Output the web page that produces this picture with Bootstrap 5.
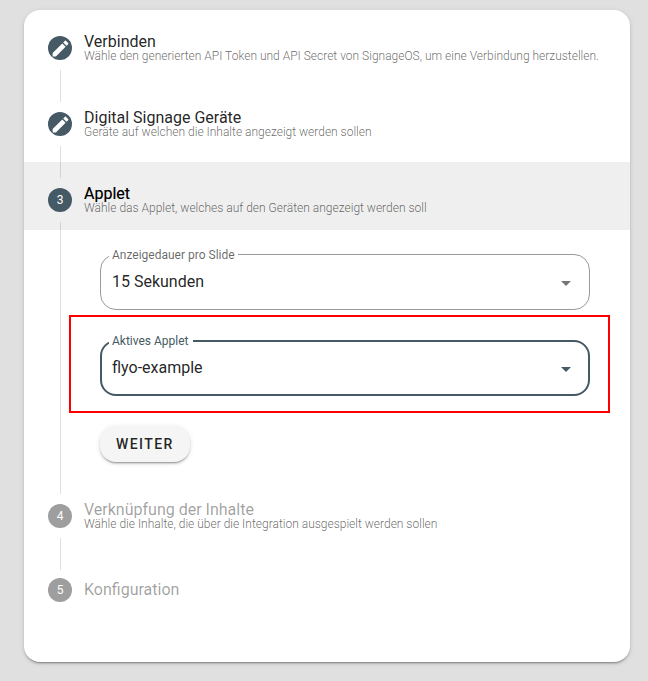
<!DOCTYPE html>
<html lang="de">
<head>
<meta charset="utf-8">
<meta name="viewport" content="width=device-width, initial-scale=1">
<title>Applet einrichten</title>
<link href="https://cdn.jsdelivr.net/npm/bootstrap@5.3.0/dist/css/bootstrap.min.css" rel="stylesheet">
<style>
  :root { --slate: #455a64; }
  body { background: #e0e0e0; font-family: Roboto, "Liberation Sans", sans-serif; color: rgba(0,0,0,.87); }
  .page-area { padding: 10px 18px 19px 24px; }
  .stepper { border-radius: 16px; padding-bottom: 44px; box-shadow: 0 3px 1px -2px rgba(0,0,0,.2), 0 2px 2px 0 rgba(0,0,0,.14), 0 1px 5px 0 rgba(0,0,0,.12); }
  .step-head { padding: 24px 24px 16px; gap: 12px; color: inherit; }
  .step-dot { width: 24px; height: 24px; font-size: 12px; line-height: 24px; background: var(--slate); }
  .step-title { font-size: 16px; line-height: 16px; }
  .step-sub { font-size: 12px; line-height: 12px; font-weight: 300; color: rgba(0,0,0,.6); }
  .is-current { background: #efefef; }
  .is-current .step-title { color: #000; text-shadow: 0 0 0 rgba(0,0,0,.5); }
  .is-pending .step-dot { background: #9e9e9e; }
  .is-pending .step-title { color: rgba(0,0,0,.38); }
  .step-line { margin: -8px 0 -16px 36px; min-height: 32px; border-left: 1px solid rgba(0,0,0,.12); }
  .step-body { padding: 32px 20px 32px 8px; }
  .inset { margin-left: 31px; margin-right: 20px; }
  .highlight { margin-top: 5px; padding: 23px 18px 15px 29px; border: 2px solid #f00; }
  .outlined { --line: #9a9a9a; --arrow: #757575; }
  .outlined.is-focused { --line: var(--slate); --arrow: var(--slate); }
  .outlined label { top: -7px; left: 9px; padding: 0 3px; font-size: 12px; line-height: 16px; color: rgba(0,0,0,.6); }
  .outlined.is-focused label { color: var(--slate); padding-right: 4px; }
  .outlined select { height: 56px; padding: 0 40px 0 11px; font-size: 16px; color: inherit; border: 1px solid var(--line); border-radius: 16px; appearance: none; outline: 0; }
  .outlined.is-focused select { border-width: 2px; padding-left: 10px; }
  .outlined svg { right: 12px; top: 17px; width: 24px; height: 24px; fill: var(--arrow); pointer-events: none; }
  .btn-next { margin-top: 13px; height: 36px; padding: 0 16px; border-radius: 16px; border: 0; font-size: 14px; font-weight: 500; letter-spacing: .1em; color: rgba(0,0,0,.87); background: #f5f5f5; box-shadow: 0 3px 1px -2px rgba(0,0,0,.2), 0 2px 2px 0 rgba(0,0,0,.14), 0 1px 5px 0 rgba(0,0,0,.12); }
</style>
<script src="https://cdn.jsdelivr.net/npm/bootstrap@5.3.0/dist/js/bootstrap.bundle.min.js"></script>
</head>
<body>
<svg class="d-none" aria-hidden="true">
  <symbol id="pencil" viewBox="0 0 24 24"><path d="M20.71 7.04c.39-.39.39-1.04 0-1.41l-2.34-2.34c-.37-.39-1.02-.39-1.41 0l-1.84 1.83 3.75 3.75M3 17.25V21h3.75L17.81 9.93l-3.75-3.75L3 17.25Z"/></symbol>
  <symbol id="caret" viewBox="0 0 24 24"><path d="M7 10l5 5 5-5H7Z"/></symbol>
</svg>
<main class="page-area">
  <ol class="stepper list-unstyled bg-white mb-0">
    <li>
      <button type="button" class="step-head d-flex align-items-center w-100 border-0 bg-transparent text-start">
        <span class="step-dot rounded-circle d-flex align-items-center justify-content-center flex-shrink-0"><svg width="21" height="21" fill="#fff" aria-hidden="true"><use href="#pencil"/></svg></span>
        <span class="d-flex flex-column"><span class="step-title">Verbinden</span><span class="step-sub">Wähle den generierten API Token und API Secret von SignageOS, um eine Verbindung herzustellen.</span></span>
      </button>
      <div class="step-line position-relative z-1"></div>
    </li>
    <li>
      <button type="button" class="step-head d-flex align-items-center w-100 border-0 bg-transparent text-start">
        <span class="step-dot rounded-circle d-flex align-items-center justify-content-center flex-shrink-0"><svg width="21" height="21" fill="#fff" aria-hidden="true"><use href="#pencil"/></svg></span>
        <span class="d-flex flex-column"><span class="step-title">Digital Signage Geräte</span><span class="step-sub">Geräte auf welchen die Inhalte angezeigt werden sollen</span></span>
      </button>
      <div class="step-line position-relative z-1"></div>
    </li>
    <li>
      <div class="step-head is-current d-flex align-items-center" aria-current="step">
        <span class="step-dot rounded-circle text-white text-center flex-shrink-0">3</span>
        <span class="d-flex flex-column"><span class="step-title">Applet</span><span class="step-sub">Wähle das Applet, welches auf den Geräten angezeigt werden soll</span></span>
      </div>
      <form class="step-line step-body position-relative">
        <div class="inset">
          <div class="outlined position-relative">
            <select id="duration" class="d-block w-100 bg-white"><option>15 Sekunden</option></select>
            <label for="duration" class="position-absolute bg-white">Anzeigedauer pro Slide</label>
            <svg class="position-absolute" aria-hidden="true"><use href="#caret"/></svg>
          </div>
        </div>
        <div class="highlight">
          <div class="outlined is-focused position-relative">
            <select id="applet" class="d-block w-100 bg-white"><option>flyo-example</option></select>
            <label for="applet" class="position-absolute bg-white">Aktives Applet</label>
            <svg class="position-absolute" aria-hidden="true"><use href="#caret"/></svg>
          </div>
        </div>
        <div class="inset">
          <button type="button" class="btn btn-next">WEITER</button>
        </div>
      </form>
    </li>
    <li class="is-pending">
      <div class="step-head d-flex align-items-center">
        <span class="step-dot rounded-circle text-white text-center flex-shrink-0">4</span>
        <span class="d-flex flex-column"><span class="step-title">Verknüpfung der Inhalte</span><span class="step-sub">Wähle die Inhalte, die über die Integration ausgespielt werden sollen</span></span>
      </div>
      <div class="step-line"></div>
    </li>
    <li class="is-pending">
      <div class="step-head d-flex align-items-center">
        <span class="step-dot rounded-circle text-white text-center flex-shrink-0">5</span>
        <span class="step-title">Konfiguration</span>
      </div>
    </li>
  </ol>
</main>
</body>
</html>
